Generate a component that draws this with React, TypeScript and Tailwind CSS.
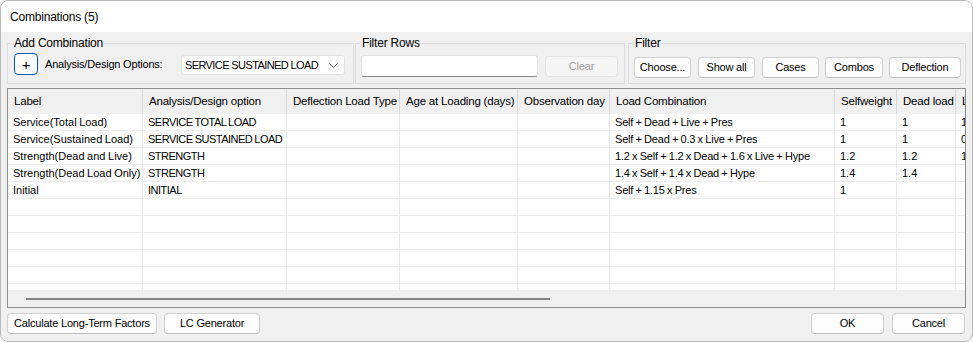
import React from "react";

const ui = "font-['Liberation_Sans',Arial,sans-serif]";

const cols = [
  { label: "Label", w: "w-[135px]", t: "" },
  { label: "Analysis/Design option", w: "w-[144px]", t: "tracking-[-0.5px]" },
  { label: "Deflection Load Type", w: "w-[113px]", t: "" },
  { label: "Age at Loading (days)", w: "w-[118px]", t: "" },
  { label: "Observation day", w: "w-[92px]", t: "" },
  { label: "Load Combination", w: "w-[225px]", t: "tracking-[-0.2px]" },
  { label: "Selfweight", w: "w-[62px]", t: "" },
  { label: "Dead load", w: "w-[59px]", t: "" },
  { label: "Live load", w: "w-[70px]", t: "" },
];

const rows: string[][] = [
  ["Service(Total Load)", "SERVICE TOTAL LOAD", "", "", "", "Self + Dead + Live + Pres", "1", "1", "1"],
  ["Service(Sustained Load)", "SERVICE SUSTAINED LOAD", "", "", "", "Self + Dead + 0.3 x Live + Pres", "1", "1", "0.3"],
  ["Strength(Dead and Live)", "STRENGTH", "", "", "", "1.2 x Self + 1.2 x Dead + 1.6 x Live + Hype", "1.2", "1.2", "1.6"],
  ["Strength(Dead Load Only)", "STRENGTH", "", "", "", "1.4 x Self + 1.4 x Dead + Hype", "1.4", "1.4", ""],
  ["Initial", "INITIAL", "", "", "", "Self + 1.15 x Pres", "1", "", ""],
];

const emptyRows = Array.from({ length: 6 }, () => cols.map(() => ""));

function Btn({ children, className = "", disabled = false }: { children: React.ReactNode; className?: string; disabled?: boolean }) {
  return (
    <button
      className={`h-[21px] rounded-[4px] border text-[11px] tracking-[-0.2px] leading-none whitespace-nowrap flex items-center justify-center ${
        disabled
          ? "bg-[#f5f5f5] border-[#e3e3e3] text-[#a0a0a0]"
          : "bg-[#fdfdfd] border-[#d0d0d0] border-b-[#bcbcbc] text-black"
      } ${className}`}
    >
      {children}
    </button>
  );
}

export default function App() {
  return (
    <div className={`w-[973px] h-[342px] flex flex-col border border-[#b9b9b9] rounded-[8px] overflow-hidden bg-[#f0f0f0] text-black ${ui}`}>
      {/* title */}
      <div className="h-[31px] bg-white flex items-center pl-[9px] text-[12px] tracking-[-0.2px]">Combinations (5)</div>

      {/* group boxes */}
      <div className="flex mt-[3px] ml-[6px] text-[11px] tracking-[-0.2px]">
        <fieldset className="w-[347px] h-[49px] border border-[#dcdcdc] pl-[5px] pr-0 pb-0">
          <legend className="px-[1px] text-[12px] leading-[16px]">Add Combination</legend>
          <div className="flex items-start mt-[2px]">
            <button className="ml-[1px] w-[24px] h-[22px] rounded-[4px] border border-[#005fb8] bg-[#fdfdfd] text-[15px] leading-none flex items-center justify-center">+</button>
            <span className="ml-[7px] mt-[4px] leading-[14px] whitespace-nowrap">Analysis/Design Options:</span>
            <div className="ml-auto mr-[8px] mt-[2px] w-[164px] h-[20px] bg-white border border-[#e2e2e2] rounded-[3px] flex items-center pl-[3px] pr-[6px]">
              <span className="text-[11px] tracking-[-0.6px] whitespace-nowrap">SERVICE SUSTAINED LOAD</span>
              <svg className="ml-auto" width="9" height="5" viewBox="0 0 9 5">
                <polyline points="0.5,0.5 4.5,4.5 8.5,0.5" fill="none" stroke="#555" strokeWidth="1" />
              </svg>
            </div>
          </div>
        </fieldset>

        <fieldset className="ml-[1px] w-[270px] h-[49px] border border-[#dcdcdc] pl-[5px] pr-0 pb-0">
          <legend className="px-[1px] text-[12px] leading-[16px]">Filter Rows</legend>
          <div className="flex items-start mt-[4px]">
            <div className="w-[177px] h-[22px] bg-white border border-[#e2e2e2] border-b-[#8a8a8a] rounded-[3px]" />
            <Btn disabled className="ml-[7px] mt-[1px] w-[73px] h-[20px]">Clear</Btn>
          </div>
        </fieldset>

        <fieldset className="ml-[3px] w-[338px] h-[49px] border border-[#dcdcdc] pl-[5px] pr-0 pb-0">
          <legend className="px-[1px] text-[12px] leading-[16px]">Filter</legend>
          <div className="flex items-start mt-[6px] gap-[6px]">
            <Btn className="w-[57px] h-[20px]">Choose...</Btn>
            <Btn className="w-[57px] h-[20px] ml-[1px]">Show all</Btn>
            <Btn className="w-[57px] h-[20px] ml-[1px]">Cases</Btn>
            <Btn className="w-[58px] h-[20px]">Combos</Btn>
            <Btn className="w-[72px] h-[20px]">Deflection</Btn>
          </div>
        </fieldset>
      </div>

      {/* grid */}
      <div className="mt-[4px] ml-[6px] w-[959px] h-[220px] border border-[#8d8d8d] bg-white flex flex-col overflow-hidden">
        <div className="flex h-[25px] bg-[#f0f0f0] shrink-0">
          {cols.map((c) => (
            <div key={c.label} className={`${c.w} shrink-0 h-full border-r border-[#d9d9d9] flex items-center pl-[6px] text-[11.5px] tracking-[-0.2px] whitespace-nowrap overflow-hidden`}>
              {c.label}
            </div>
          ))}
        </div>
        <div className="flex-1 overflow-hidden">
          {[...rows, ...emptyRows].map((r, i) => (
            <div key={i} className="flex h-[17px] border-b border-[#ececec]">
              {cols.map((c, j) => (
                <div key={j} className={`${c.w} ${c.t} shrink-0 h-full border-r border-[#ececec] flex items-center pl-[5px] text-[11px] [word-spacing:-0.5px] whitespace-nowrap overflow-hidden`}>
                  {r[j]}
                </div>
              ))}
            </div>
          ))}
        </div>
        <div className="h-[17px] shrink-0 bg-[#f0f0f0] flex items-center">
          <div className="ml-[18px] w-[524px] h-[2px] bg-[#858585]" />
        </div>
      </div>

      {/* bottom buttons */}
      <div className="flex mt-[5px] ml-[6px]">
        <Btn className="w-[150px]">Calculate Long-Term Factors</Btn>
        <Btn className="ml-[7px] w-[96px]">LC Generator</Btn>
        <Btn className="ml-auto w-[73px]">OK</Btn>
        <Btn className="ml-[8px] mr-[7px] w-[73px]">Cancel</Btn>
      </div>
    </div>
  );
}
